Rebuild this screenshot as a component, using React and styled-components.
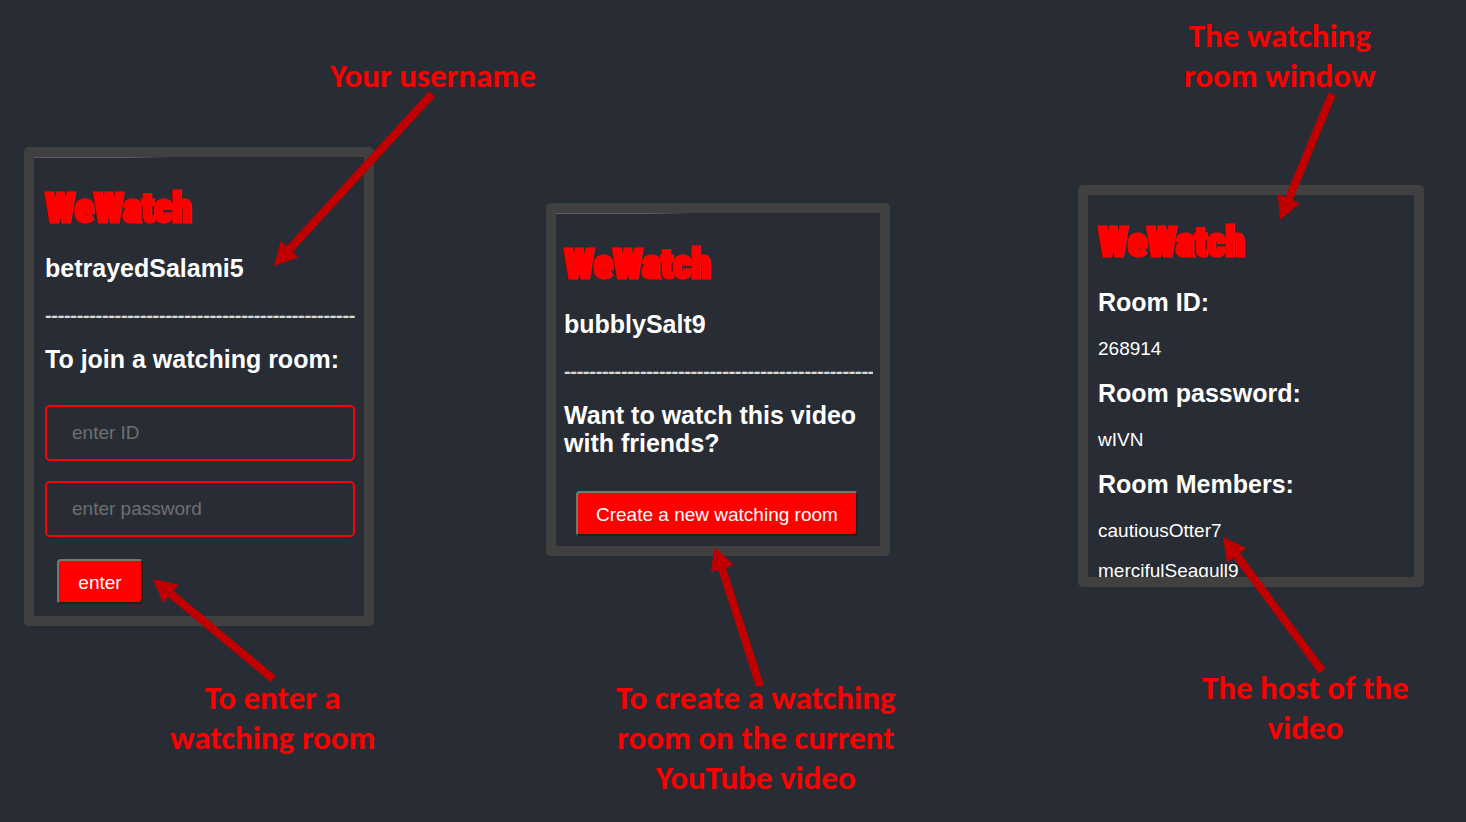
import React from "react";
import styled, { createGlobalStyle } from "styled-components";

const GlobalStyle = createGlobalStyle`
  *, *::before, *::after { box-sizing: border-box; }
  body {
    margin: 0;
    background: #282c34;
    color: #fff;
    font-family: "Liberation Sans", Arial, sans-serif;
  }
`;

const Board = styled.main`
  display: grid;
  grid-template-columns: 522fr 532fr 388fr;
  min-height: 100vh;
  padding-left: 24px;
  overflow: hidden;
`;

const Column = styled.section`
  position: relative;
  display: flex;
  flex-direction: column;
  align-items: flex-start;
  padding-top: ${(p) => p.$top}px;
`;

const Callout = styled.p`
  width: max-content;
  margin: 0 0 0 ${(p) => p.$indent}px;
  color: #f00;
  font: 700 33px/40px Carlito, Calibri, Lato, sans-serif;
  text-align: center;
`;

const Card = styled.article`
  width: 100%;
  max-width: ${(p) => p.$width}px;
  height: ${(p) => (p.$height ? `${p.$height}px` : "auto")};
  margin: ${(p) => p.$margin};
  padding: ${(p) => p.$padding};
  overflow: hidden;
  border: 10px solid #404040;
  border-radius: 5px;
  background: ${(p) =>
    p.$edge
      ? "linear-gradient(90deg, #5c5c5c 0 96px, #26262b 140px) top / 100% 1px no-repeat"
      : "none"};
`;

const Logo = styled.h1`
  margin: 0 0 21px;
  color: #f00;
  font: 900 40px/48px "Roboto Condensed", Impact, Roboto, sans-serif;
  -webkit-text-stroke: 3px #f00;
`;

const Heading = styled.h2`
  margin: 0;
  font-size: 25px;
  line-height: 28px;
`;

const Divider = styled.p`
  margin: 23px 0 18px;
  overflow: hidden;
  color: #d8d8d4;
  font-size: 19px;
  font-weight: 700;
  line-height: 22px;
  text-shadow: 1px 0 #8a8a88;
  white-space: nowrap;
`;

const JoinForm = styled.form`
  display: flex;
  flex-direction: column;
  align-items: flex-start;
  gap: 20px;
  margin-top: 32px;
`;

const Field = styled.input`
  width: 100%;
  height: 56px;
  padding: 0 25px;
  border: 2px solid #f00;
  border-radius: 5px;
  background: transparent;
  color: #fff;
  font: 19px "Liberation Sans", Arial, sans-serif;
  &::placeholder { color: #6f6f70; opacity: 1; }
`;

const Button = styled.button`
  min-width: 86px;
  height: 45px;
  margin: ${(p) => p.$top}px 0 0 12px;
  padding: 2px 18px 0;
  border: 2px solid;
  border-color: #767676 #212121 #212121 #767676;
  border-radius: 4px;
  background: #f00;
  color: #fff;
  font: 19px "Liberation Sans", Arial, sans-serif;
  white-space: nowrap;
`;

const Details = styled.dl`
  margin: 0;
`;

const Term = styled.dt`
  font-size: 25px;
  font-weight: 700;
  line-height: 28px;
`;

const Value = styled.dd`
  margin: 22px 0 19px;
  font-size: 19px;
  line-height: 22px;
  & + & { margin-top: -1px; }
`;

const ArrowLayer = styled.svg`
  position: absolute;
  top: 0;
  left: 0;
  width: 1px;
  height: 1px;
  overflow: visible;
  pointer-events: none;
`;

function Arrow({ from, to }) {
  const dx = to[0] - from[0];
  const dy = to[1] - from[1];
  const length = Math.hypot(dx, dy);
  const angle = (Math.atan2(dy, dx) * 180) / Math.PI;
  return (
    <g transform={`translate(${from[0]} ${from[1]}) rotate(${angle})`} fill="#c00000">
      <rect x="0" y="-4" width={length - 20} height="8" />
      <polygon points={`${length},0 ${length - 23},-12 ${length - 23},12`} />
    </g>
  );
}

const DASHES = "-".repeat(49);

export default function App() {
  return (
    <>
      <GlobalStyle />
      <Board>
        <Column $top={56}>
          <Callout $indent={306}>Your username</Callout>
          <Card $width={350} $margin="51px 0 52px" $padding="28px 9px 12px 11px" $edge>
            <Logo>WeWatch</Logo>
            <Heading>betrayedSalami5</Heading>
            <Divider>{DASHES}</Divider>
            <Heading>To join a watching room:</Heading>
            <JoinForm onSubmit={(e) => e.preventDefault()}>
              <Field type="text" placeholder="enter ID" aria-label="enter ID" />
              <Field type="text" placeholder="enter password" aria-label="enter password" />
              <Button type="submit" $top={2}>enter</Button>
            </JoinForm>
          </Card>
          <Callout $indent={146}>
            To enter a<br />watching room
          </Callout>
          <ArrowLayer aria-hidden="true">
            <Arrow from={[408, 94]} to={[250, 266]} />
            <Arrow from={[249, 679]} to={[129, 579]} />
          </ArrowLayer>
        </Column>

        <Column $top={203}>
          <Card $width={344} $margin="0 0 122px" $padding="28px 7px 10px 8px" $edge>
            <Logo>WeWatch</Logo>
            <Heading>bubblySalt9</Heading>
            <Divider>{DASHES}</Divider>
            <Heading>Want to watch this video with friends?</Heading>
            <Button type="button" $top={34}>Create a new watching room</Button>
          </Card>
          <Callout $indent={70}>
            To create a watching<br />room on the current<br />YouTube video
          </Callout>
          <ArrowLayer aria-hidden="true">
            <Arrow from={[214, 686]} to={[169, 547]} />
          </ArrowLayer>
        </Column>

        <Column $top={16}>
          <Callout $indent={106}>
            The watching<br />room window
          </Callout>
          <Card $width={346} $height={402} $margin="89px 0 81px" $padding="24px 10px 0">
            <Logo>WeWatch</Logo>
            <Details>
              <Term>Room ID:</Term>
              <Value>268914</Value>
              <Term>Room password:</Term>
              <Value>wIVN</Value>
              <Term>Room Members:</Term>
              <Value>cautiousOtter7</Value>
              <Value>mercifulSeagull9</Value>
            </Details>
          </Card>
          <Callout $indent={124}>
            The host of the<br />video
          </Callout>
          <ArrowLayer aria-hidden="true">
            <Arrow from={[254, 94]} to={[202, 220]} />
            <Arrow from={[244, 671]} to={[145, 537]} />
          </ArrowLayer>
        </Column>
      </Board>
    </>
  );
}
